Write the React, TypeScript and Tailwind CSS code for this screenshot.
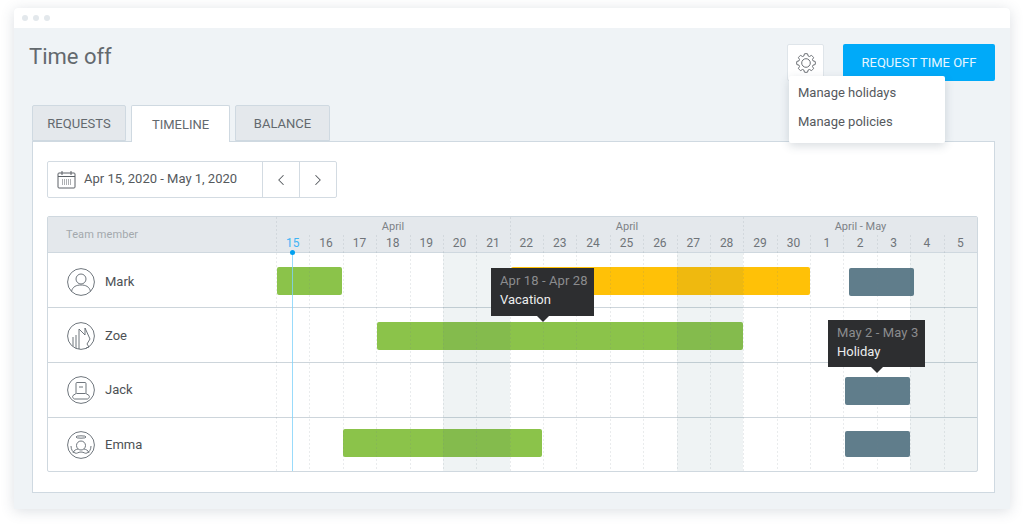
import React from 'react';
import { ChevronLeft, ChevronRight } from 'lucide-react';

const days = [15, 16, 17, 18, 19, 20, 21, 22, 23, 24, 25, 26, 27, 28, 29, 30, 1, 2, 3, 4, 5];
const weekends = [5, 6, 12, 13, 19, 20];
const monthStarts = [0, 7, 14];

const MarkAvatar = () => (
  <>
    <circle cx="14" cy="11" r="5" />
    <path d="M4.500 23.500c1-5 5-6.500 9.500-6.500s8.500 1.500 9.500 6.500" />
  </>
);

const ZoeAvatar = () => (
  <>
    <path d="M6 15v9M9 13v13M12 7v20" />
    <path d="M12 7l6 6V6l5 11-3 5 2 3-3 1" />
  </>
);

const JackAvatar = () => (
  <>
    <rect x="9" y="6.500" width="10" height="11" rx="1" />
    <path d="M12 11h4M9 17.500l-3 2c-1 1 0 3 1.500 3.500h13c1.500-.5 2.500-2.500 1.500-3.500l-3-2" />
  </>
);

const EmmaAvatar = () => (
  <>
    <ellipse cx="14" cy="6" rx="5" ry="1.200" />
    <circle cx="14" cy="14.500" r="4.500" />
    <path d="M4 15c0 4 2 6 4 7 2 1 3-1 6-1s4 2 6 1c2-1 4-3 4-7M6 22c1-3 3-3.500 5-4M22 22c-1-3-3-3.500-5-4" />
  </>
);

type Bar = { color: string; ml: string; w: string; mt?: string; h?: string };

const rows: { name: string; avatar: React.ReactNode; rowClass: string; labelPad: string; barTop: string; bars: Bar[] }[] = [
  {
    name: 'Mark',
    avatar: <MarkAvatar />,
    rowClass: 'h-[55px]',
    labelPad: 'pt-[3px]',
    barTop: 'pt-[14px]',
    bars: [
      { color: 'bg-[#8bc34a]', ml: 'ml-px', w: 'w-[65px]' },
      { color: 'bg-[#ffc107]', ml: 'ml-[169px]', w: 'w-[299px]' },
      { color: 'bg-[#607d8b]', ml: 'ml-[39px]', w: 'w-[65px]', mt: 'mt-px' },
    ],
  },
  {
    name: 'Zoe',
    avatar: <ZoeAvatar />,
    rowClass: 'h-[55px]',
    labelPad: 'pt-[2px]',
    barTop: 'pt-[14px]',
    bars: [{ color: 'bg-[#8bc34a]', ml: 'ml-[101px]', w: 'w-[366px]' }],
  },
  {
    name: 'Jack',
    avatar: <JackAvatar />,
    rowClass: 'h-[55px]',
    labelPad: '',
    barTop: 'pt-[14px]',
    bars: [{ color: 'bg-[#607d8b]', ml: 'ml-[569px]', w: 'w-[65px]' }],
  },
  {
    name: 'Emma',
    avatar: <EmmaAvatar />,
    rowClass: 'h-[53px]',
    labelPad: 'pt-px',
    barTop: 'pt-[11px]',
    bars: [
      { color: 'bg-[#8bc34a]', ml: 'ml-[67px]', w: 'w-[199px]', h: 'h-[28px]' },
      { color: 'bg-[#607d8b]', ml: 'ml-[303px]', w: 'w-[65px]', mt: 'mt-[2px]', h: 'h-[26px]' },
    ],
  },
];

// 8 tooth gear outline
const gearPath = (() => {
  const cx = 10;
  const cy = 10;
  const pts: string[] = [];
  for (let i = 0; i < 8; i++) {
    const a = (i * Math.PI) / 4 - Math.PI / 2;
    const at = (r: number, o: number) =>
      `${(cx + r * Math.cos(a + o)).toFixed(2)} ${(cy + r * Math.sin(a + o)).toFixed(2)}`;
    pts.push(`${i === 0 ? 'M' : 'L'}${at(7.3, -0.3)}`);
    pts.push(`L${at(9.3, -0.17)}`);
    pts.push(`Q${at(9.6, 0)} ${at(9.3, 0.17)}`);
    pts.push(`L${at(7.3, 0.3)}`);
  }
  return pts.join(' ') + ' Z';
})();

const Tooltip = ({ range, label, className }: { range: string; label: string; className: string }) => (
  <div className={`absolute z-20 bg-[#2d2e30] px-[9px] pt-[3px] text-[13px] leading-[19px] ${className}`}>
    <div className="whitespace-nowrap tracking-[0.1px] text-[#8b8c8e]">{range}</div>
    <div className="whitespace-nowrap text-[#eceded]">{label}</div>
    <div className="absolute -bottom-[6px] left-1/2 h-0 w-0 -translate-x-1/2 border-x-[6px] border-t-[6px] border-x-transparent border-t-[#2d2e30]" />
  </div>
);

const tabClass = 'flex h-[36px] items-center justify-center rounded-t-[2px] border border-[#cfd9e1] pt-px text-[13px]';

export default function App() {
  return (
    <div className="h-[528px] w-[1024px] overflow-hidden bg-white pl-[14px] pt-2 font-['Roboto',sans-serif]">
      <div className="h-[501px] w-[996px] overflow-hidden rounded-t-[4px] bg-[#eff3f6] shadow-[0_2px_14px_rgba(60,80,100,0.18)]">
        <div className="flex h-5 items-center gap-[5px] bg-white pl-2">
          <span className="h-[6px] w-[6px] rounded-full bg-[#e3e8ec]" />
          <span className="h-[6px] w-[6px] rounded-full bg-[#e3e8ec]" />
          <span className="h-[6px] w-[6px] rounded-full bg-[#e3e8ec]" />
        </div>

        <div className="relative flex items-start justify-between pl-[15px] pr-[15px] pt-4">
          <h1 className="-mt-[3px] text-[22px] leading-[32px] text-[#63696e]">Time off</h1>
          <div className="flex items-start gap-[19px]">
            <div className="flex h-[37px] w-[37px] items-center justify-center rounded-[2px] border border-[#dfe5ea] bg-white">
              <svg width="20" height="20" viewBox="0 0 20 20" fill="none" stroke="#5c6166" strokeWidth="0.9">
                <path d={gearPath} strokeLinejoin="round" />
                <circle cx="10" cy="10" r="4.300" />
              </svg>
            </div>
            <div className="flex h-[37px] w-[152px] items-center justify-center rounded-[2px] bg-[#00aaf9] text-[13px] text-[#e6f6ff]">
              REQUEST TIME OFF
            </div>
          </div>
          <div className="absolute left-[775px] top-[48px] z-30 h-[67px] w-[156px] rounded-[2px] bg-white pl-[9px] pt-[2px] text-[13px] leading-[29px] text-[#55595d] shadow-[0_3px_10px_rgba(60,80,100,0.2)]">
            <div>Manage holidays</div>
            <div>Manage policies</div>
          </div>
        </div>

        <div className="ml-[18px] mt-6 flex h-[36px] w-[963px] gap-[5px]">
          <div className={`${tabClass} w-[94px] bg-[#e4e8ec] text-[#63696e]`}>REQUESTS</div>
          <div className={`${tabClass} relative z-10 h-[37px]! w-[99px] border-b-0 bg-white text-[#63696e]`}>TIMELINE</div>
          <div className={`${tabClass} w-[95px] bg-[#e4e8ec] text-[#63696e]`}>BALANCE</div>
        </div>

        <div className="ml-[18px] h-[352px] w-[963px] border border-[#cfd9e1] bg-white px-[14px] pt-[19px]">
          <div className="flex h-[37px] w-[290px] rounded-[2px] border border-[#d3dbe2] text-[#55595d]">
            <div className="flex w-[215px] items-center gap-[8px] pb-px pl-[9px] text-[13px]">
              <svg width="19" height="19" viewBox="0 0 19 19" fill="none" stroke="#5c6166" strokeWidth="1">
                <rect x="1" y="3" width="17" height="15" rx="1" />
                <path d="M1 6.500h17M5 1v4M14 1v4" />
                <path d="M5 10h9M5 12h9M5 14h9" strokeDasharray="1 1" />
              </svg>
              <span>Apr 15, 2020 - May 1, 2020</span>
            </div>
            <div className="flex w-[37px] items-center justify-center border-l border-[#d3dbe2]">
              <ChevronLeft size={18} strokeWidth={1.4} />
            </div>
            <div className="flex w-[37px] items-center justify-center border-l border-[#d3dbe2]">
              <ChevronRight size={18} strokeWidth={1.4} />
            </div>
          </div>

          <div className="relative mt-[18px] h-[256px] w-[931px] rounded-[2px] border border-[#cfd8df]">
            <div className="flex h-[36px] border-b border-[#cfd8df] bg-[#e4e8ec]">
              <div className="w-[228px] pl-[18px] pt-[11px] text-[11px] leading-[14px] tracking-[0.1px] text-[#a3a8ad]">Team member</div>
              <div className="w-[701px]">
                <div className="grid h-[18px] grid-cols-[234px_234px_233px] text-center text-[11px] leading-[19px] text-[#7d8287]">
                  <span>April</span>
                  <span>April</span>
                  <span>April - May</span>
                </div>
                <div className="grid grid-cols-21 text-center text-[12px] leading-[17px] text-[#6f7479]">
                  {days.map((d, i) => (
                    <span key={i} className={i === 0 ? 'text-[#3fb4f5]' : ''}>{d}</span>
                  ))}
                </div>
              </div>
            </div>

            {rows.map((row, i) => (
              <div key={row.name} className={`flex ${row.rowClass} ${i < 3 ? 'border-b border-[#cdd5db]' : ''}`}>
                <div className={`flex w-[228px] items-center gap-[10px] pl-[19px] text-[13px] text-[#4d5155] ${row.labelPad}`}>
                  <svg width="28" height="28" viewBox="0 0 28 28" fill="none" stroke="#5f676e" strokeWidth="0.9">
                    <circle cx="14" cy="14" r="13.400" />
                    {row.avatar}
                  </svg>
                  <span>{row.name}</span>
                </div>
                <div className={`flex w-[701px] items-start ${row.barTop}`}>
                  {row.bars.map((b, j) => (
                    <div key={j} className={`${b.h ?? 'h-[28px]'} shrink-0 rounded-[2px] ${b.color} ${b.ml} ${b.w} ${b.mt ?? ''}`} />
                  ))}
                </div>
              </div>
            ))}

            {/* weekend shade and dotted day lines sit over the bars */}
            <div className="pointer-events-none absolute bottom-0 left-[228px] top-0 z-10 grid w-[701px] grid-cols-21">
              {days.map((_, i) => (
                <div key={i} className="relative">
                  {weekends.includes(i) && <div className="absolute inset-x-0 bottom-0 top-[36px] bg-[#2f6070]/[0.08]" />}
                  <div className={`absolute bottom-0 left-0 w-px bg-[repeating-linear-gradient(to_bottom,rgba(110,125,135,0.15)_0_2px,transparent_2px_4px)] ${monthStarts.includes(i) ? 'top-0' : 'top-[18px]'}`} />
                </div>
              ))}
            </div>

            {/* today marker */}
            <div className="pointer-events-none absolute bottom-0 left-[244px] top-[36px] z-10 w-px bg-[#7fd2fa]/80">
              <div className="absolute -left-[2px] -top-[3px] h-[5px] w-[5px] rounded-full bg-[#00a0f0]" />
            </div>

            <Tooltip range="Apr 18 - Apr 28" label="Vacation" className="left-[443px] top-[51px] h-[48px] w-[103px]" />
            <Tooltip range="May 2 - May 3" label="Holiday" className="left-[780px] top-[103px] h-[47px] w-[97px]" />
          </div>
        </div>
      </div>
    </div>
  );
}
